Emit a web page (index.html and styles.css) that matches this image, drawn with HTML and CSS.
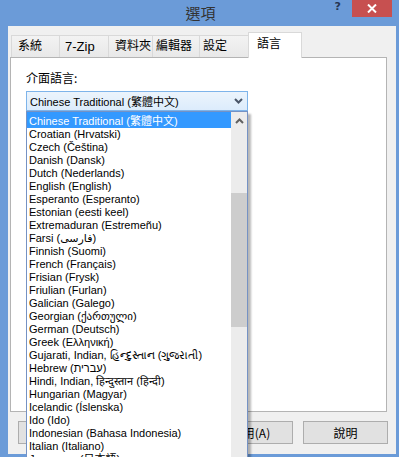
FILE: index.html
```html
<!DOCTYPE html>
<html lang="zh-Hant">
<head>
<meta charset="utf-8">
<title>選項</title>
<link rel="stylesheet" href="styles.css">
</head>
<body>
<div class="window">
  <div class="titlebar">
    <span class="title">選項</span>
    <div class="controls">
      <span class="help">?</span>
      <span class="close"><svg width="10" height="9" viewBox="0 0 10 9"><path d="M1 0.5 L9 8.5 M9 0.5 L1 8.5" stroke="#fff" stroke-width="2" fill="none"/></svg></span>
    </div>
  </div>
  <div class="client">
    <div class="tabs">
      <div class="tab tab-system">系統</div>
      <div class="tab tab-zip">7-Zip</div>
      <div class="tab tab-folders">資料夾</div>
      <div class="tab tab-editor">編輯器</div>
      <div class="tab tab-settings">設定</div>
      <div class="tab tab-language active">語言</div>
    </div>
    <div class="panel">
      <div class="label">介面語言:</div>
      <div class="combo">
        <span class="combo-text">Chinese Traditional (繁體中文)</span>
        <svg class="chev" width="9" height="6" viewBox="0 0 9 6"><path d="M1 1 L4.5 4.5 L8 1" stroke="#4a5668" stroke-width="2" fill="none"/></svg>
        <div class="dropdown">
          <ul class="items">
            <li class="sel">Chinese Traditional (繁體中文)</li>
            <li>Croatian (Hrvatski)</li>
            <li>Czech (Čeština)</li>
            <li>Danish (Dansk)</li>
            <li>Dutch (Nederlands)</li>
            <li>English (English)</li>
            <li>Esperanto (Esperanto)</li>
            <li>Estonian (eesti keel)</li>
            <li>Extremaduran (Estremeñu)</li>
            <li>Farsi (فارسی)</li>
            <li>Finnish (Suomi)</li>
            <li>French (Français)</li>
            <li>Frisian (Frysk)</li>
            <li>Friulian (Furlan)</li>
            <li>Galician (Galego)</li>
            <li>Georgian (ქართული)</li>
            <li>German (Deutsch)</li>
            <li>Greek (Ελληνική)</li>
            <li>Gujarati, Indian, હિન્દુસ્તાન (ગુજરાતી)</li>
            <li>Hebrew (עברית)</li>
            <li>Hindi, Indian, हिन्दुस्तान (हिन्दी)</li>
            <li>Hungarian (Magyar)</li>
            <li>Icelandic (Íslenska)</li>
            <li>Ido (Ido)</li>
            <li>Indonesian (Bahasa Indonesia)</li>
            <li>Italian (Italiano)</li>
            <li>Japanese (日本語)</li>
          </ul>
          <div class="scrollbar">
            <div class="sb-up"><svg width="9" height="6" viewBox="0 0 9 6"><path d="M1 5 L4.5 1.5 L8 5" stroke="#606060" stroke-width="2" fill="none"/></svg></div>
            <div class="sb-thumb"></div>
          </div>
        </div>
      </div>
    </div>
    <div class="buttons">
      <button class="btn">確定</button>
      <button class="btn">取消</button>
      <button class="btn">套用(A)</button>
      <button class="btn">說明</button>
    </div>
  </div>
</div>
</body>
</html>
```
FILE: styles.css
```css
html, body {
  margin: 0;
  padding: 0;
}
body {
  width: 399px;
  height: 457px;
  overflow: hidden;
  background: #6b9bd8;
  font-family: "Liberation Sans", "Noto Sans CJK TC", "DejaVu Sans", sans-serif;
  color: #000;
}
.window {
  height: 457px;
  display: flex;
  flex-direction: column;
}
.titlebar {
  height: 26px;
  flex: none;
  display: grid;
  grid-template-columns: 1fr auto 1fr;
  align-items: start;
}
.title {
  grid-column: 2;
  font-family: "Noto Sans CJK TC", sans-serif;
  font-size: 15px;
  line-height: 25px;
  color: #333;
  padding-left: 2px;
}
.controls {
  grid-column: 3;
  justify-self: end;
  display: flex;
  align-items: flex-start;
  margin-right: 7px;
}
.help {
  font-family: "DejaVu Sans", sans-serif;
  font-weight: bold;
  font-size: 11px;
  line-height: 14px;
  color: #253653;
  margin-right: 11px;
}
.close {
  width: 40px;
  height: 17px;
  background: #c75050;
  display: flex;
  align-items: center;
  justify-content: center;
}
.client {
  flex: 1;
  margin: 0 3px 3px 8px;
  background: #f0f0f0;
  padding: 6px 9px 10px 2px;
  display: flex;
  flex-direction: column;
  min-height: 0;
}
.tabs {
  height: 26px;
  flex: none;
  display: flex;
  align-items: flex-end;
  padding-left: 1px;
  margin-bottom: -1px;
  position: relative;
  z-index: 2;
}
.tab {
  box-sizing: border-box;
  height: 22px;
  margin-bottom: 1px;
  border: 1px solid #d9d9d9;
  border-bottom: none;
  margin-left: -1px;
  background: linear-gradient(#f3f3f3, #e8e8e8);
  font-family: "Liberation Sans", "Noto Sans CJK TC", sans-serif;
  font-size: 12px;
  line-height: 21px;
  padding: 0 0 0 6px;
  color: #000;
  white-space: nowrap;
}
.tab:first-child { margin-left: 0; }
.tab-system { width: 49px; }
.tab-zip { width: 50px; padding-left: 5px; font-size: 13px; }
.tab-folders { width: 45px; }
.tab-editor { width: 48px; padding-left: 3px; }
.tab-settings { width: 51px; padding-left: 3px; }
.tab.active {
  width: 54px;
  height: 26px;
  margin: 0 0 0 -2px;
  background: #fff;
  line-height: 22px;
  padding-left: 8px;
  position: relative;
  z-index: 1;
}
.panel {
  flex: 1;
  min-height: 0;
  border: 1px solid #b4b4b4;
  background: #fff;
  padding: 13px 0 0 15px;
  position: relative;
  z-index: 1;
}
.label {
  font-family: "Noto Sans CJK TC", sans-serif;
  font-size: 12px;
  line-height: 14px;
  height: 14px;
}
.combo {
  margin-top: 6px;
  box-sizing: border-box;
  width: 222px;
  height: 20px;
  border: 1px solid #7eb4ea;
  background: linear-gradient(#ecf4fc, #dcecfc);
  display: flex;
  align-items: center;
  padding-left: 3px;
  position: relative;
  font-size: 11px;
}
.combo-text {
  flex: 1;
  white-space: nowrap;
}
.chev {
  margin-right: 4px;
}
.dropdown {
  position: absolute;
  left: -1px;
  top: 19px;
  width: 222px;
  height: 420px;
  box-sizing: border-box;
  border: 1px solid #7592c4;
  background: #fff;
  display: flex;
  box-shadow: 3px 3px 2px rgba(0,0,0,0.28);
  z-index: 5;
}
.items {
  list-style: none;
  margin: 0;
  padding: 0;
  flex: 1;
  font-size: 11px;
}
.items li {
  height: 13px;
  line-height: 13px;
  padding-left: 2px;
  white-space: nowrap;
  overflow: hidden;
}
.items li.sel {
  height: 16px;
  box-sizing: border-box;
  padding-top: 3px;
  background: #3399ff;
  color: #fff;
}
.scrollbar {
  width: 16px;
  flex: none;
  background: #ececec;
  display: flex;
  flex-direction: column;
}
.sb-up {
  height: 17px;
  display: flex;
  align-items: center;
  justify-content: center;
}
.sb-thumb {
  margin-top: 64px;
  height: 134px;
  background: #cdcdcd;
}
.buttons {
  flex: none;
  margin-top: 9px;
  display: flex;
  justify-content: flex-end;
  gap: 10px;
  margin-right: -1px;
}
.btn {
  box-sizing: border-box;
  width: 85px;
  height: 23px;
  border: 1px solid #adadad;
  background: #e1e1e1;
  font-family: "Noto Sans CJK TC", sans-serif;
  font-size: 12px;
  color: #000;
  padding: 0;
}
```
